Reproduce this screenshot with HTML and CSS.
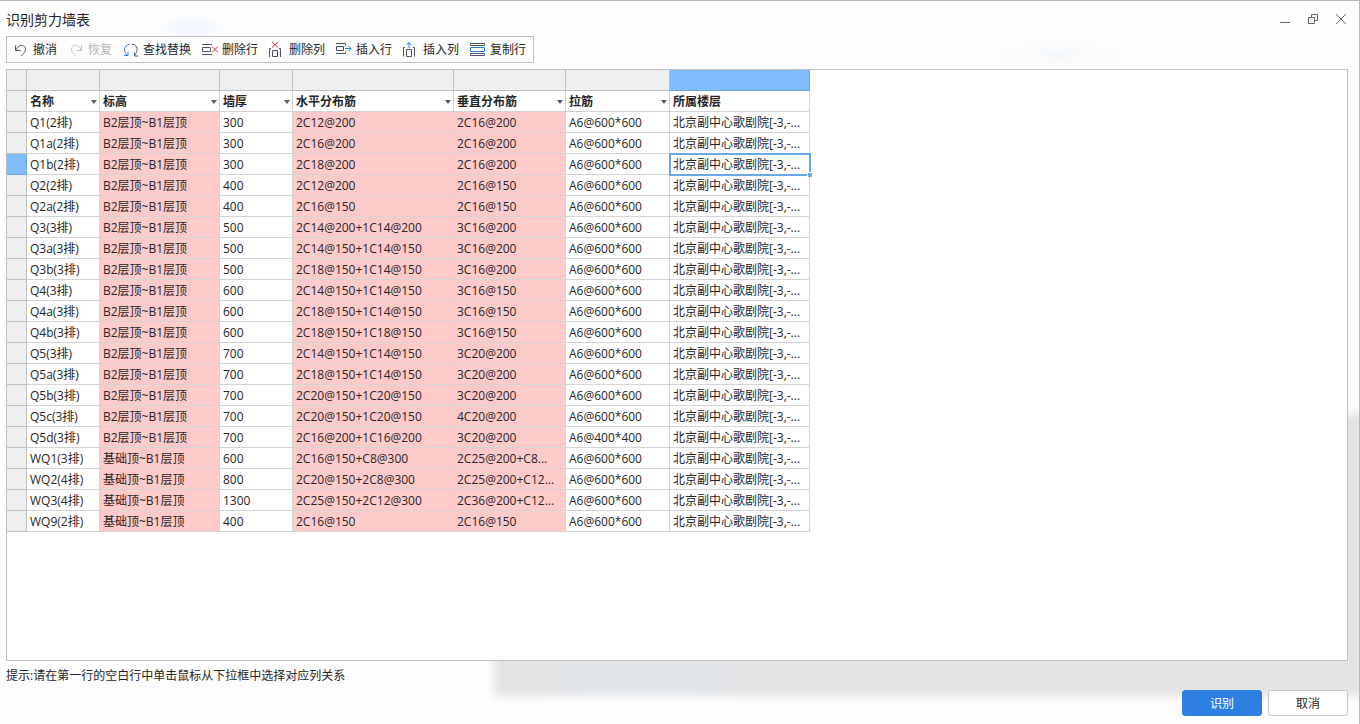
FILE: index.html
```
<!DOCTYPE html>
<html lang="zh-CN">
<head>
<meta charset="utf-8">
<title>识别剪力墙表</title>
<link rel="stylesheet" href="styles.css">
</head>
<body>
<main class="dialog">
  <div class="backdrop" aria-hidden="true"></div>
  <header class="titlebar">
    <h1 class="title">识别剪力墙表</h1>
    <div class="window-controls">
      <button class="window-button" type="button" aria-label="最小化"><svg viewBox="0 0 12 12"><path d="M1 9.5h10"/></svg></button>
      <button class="window-button" type="button" aria-label="还原"><svg viewBox="0 0 12 12"><path d="M1.500 4.500h6v6h-6zM4.500 4.500v-3h6v6h-3"/></svg></button>
      <button class="window-button" type="button" aria-label="关闭"><svg viewBox="0 0 12 12"><path d="M1 1l10 10M11 1L1 11"/></svg></button>
    </div>
  </header>

  <div class="toolbar" role="toolbar" aria-label="表格工具">
    <button class="tool" type="button"><svg class="icon" viewBox="0 0 16 16"><path d="M2.500 3.500v5h5M2.500 8.500C5 3.500 9 2 11.500 4.500c2.500 3 0 6.500-3.500 9.500"/></svg>撤消</button>
    <button class="tool" type="button" disabled><svg class="icon" viewBox="0 0 16 16"><path d="M13.500 3.500v5h-5M13.500 8.500C11 3.500 7 2 4.500 4.500c-2.500 3 0 6.500 3.500 9.500"/></svg>恢复</button>
    <button class="tool" type="button"><svg class="icon" viewBox="0 0 16 16"><path class="blue" d="M6.500 2C.5 3.500.5 9.500 4 13.500M1 13.500h4V10"/><path d="M9 2.500h2.500c3.500 3 3.500 7.500 0 10.500M15 14h-3.500v-3.500"/></svg>查找替换</button>
    <button class="tool" type="button"><svg class="icon" viewBox="0 0 16 16"><path d="M0 2.500h10M0 12.500h10M.5 5.500h8v4h-8z"/><path class="red" d="M10 4.500l6 6M16 4.500l-6 6"/></svg>删除行</button>
    <button class="tool" type="button"><svg class="icon" viewBox="0 0 16 16"><path d="M.5 15V6.500H2M11.500 15V6.500H10M3.500 8.500h5v6h-5z"/><path class="red" d="M3 0l6 5.500M9 0L3 5.500"/></svg>删除列</button>
    <button class="tool" type="button"><svg class="icon" viewBox="0 0 16 16"><path d="M0 1.500h9.500v2M0 11.500h9.500v-2M.5 4.500h7v4h-7z"/><path class="blue" d="M9 6.500h6M12.500 4L15 6.500 12.500 9"/></svg>插入行</button>
    <button class="tool" type="button"><svg class="icon" viewBox="0 0 16 16"><path d="M.5 14.500V5.500H2M11.500 14.500V5.500H10M3.500 7.500h5v7h-5z"/><path class="blue" d="M6 6V.5M3.500 3L6 .5 8.500 3"/></svg>插入列</button>
    <button class="tool" type="button"><svg class="icon" viewBox="0 0 16 16"><path d="M.5 3.500v-2h14v2zM.5 13.500v-2h14v2z"/><path class="blue" d="M.5 5.500h14v4H.5z"/></svg>复制行</button>
  </div>

  <section class="sheet-panel">
    <table class="sheet">
      <colgroup><col class="c-handle"><col class="c-name"><col class="c-level"><col class="c-thick"><col class="c-horizontal"><col class="c-vertical"><col class="c-tie"><col class="c-floor"></colgroup>
      <thead>
        <tr class="mapping"><td></td><td></td><td></td><td></td><td></td><td></td><td></td><td class="active"></td></tr>
        <tr class="names">
          <td class="handle"></td>
          <th scope="col"><div class="head">名称<button class="drop" type="button" aria-label="名称选项"></button></div></th>
          <th scope="col"><div class="head">标高<button class="drop" type="button" aria-label="标高选项"></button></div></th>
          <th scope="col"><div class="head">墙厚<button class="drop" type="button" aria-label="墙厚选项"></button></div></th>
          <th scope="col"><div class="head">水平分布筋<button class="drop" type="button" aria-label="水平分布筋选项"></button></div></th>
          <th scope="col"><div class="head">垂直分布筋<button class="drop" type="button" aria-label="垂直分布筋选项"></button></div></th>
          <th scope="col"><div class="head">拉筋<button class="drop" type="button" aria-label="拉筋选项"></button></div></th>
          <th scope="col">所属楼层</th>
        </tr>
      </thead>
      <tbody>
        <tr><td class="handle"></td><td>Q1(2排)</td><td class="warn">B2层顶~B1层顶</td><td>300</td><td class="warn">2C12@200</td><td class="warn">2C16@200</td><td>A6@600*600</td><td>北京副中心歌剧院[-3,-...</td></tr>
        <tr><td class="handle"></td><td>Q1a(2排)</td><td class="warn">B2层顶~B1层顶</td><td>300</td><td class="warn">2C16@200</td><td class="warn">2C16@200</td><td>A6@600*600</td><td>北京副中心歌剧院[-3,-...</td></tr>
        <tr><td class="handle active"></td><td>Q1b(2排)</td><td class="warn">B2层顶~B1层顶</td><td>300</td><td class="warn">2C18@200</td><td class="warn">2C16@200</td><td>A6@600*600</td><td class="selected">北京副中心歌剧院[-3,-...</td></tr>
        <tr><td class="handle"></td><td>Q2(2排)</td><td class="warn">B2层顶~B1层顶</td><td>400</td><td class="warn">2C12@200</td><td class="warn">2C16@150</td><td>A6@600*600</td><td>北京副中心歌剧院[-3,-...</td></tr>
        <tr><td class="handle"></td><td>Q2a(2排)</td><td class="warn">B2层顶~B1层顶</td><td>400</td><td class="warn">2C16@150</td><td class="warn">2C16@150</td><td>A6@600*600</td><td>北京副中心歌剧院[-3,-...</td></tr>
        <tr><td class="handle"></td><td>Q3(3排)</td><td class="warn">B2层顶~B1层顶</td><td>500</td><td class="warn">2C14@200+1C14@200</td><td class="warn">3C16@200</td><td>A6@600*600</td><td>北京副中心歌剧院[-3,-...</td></tr>
        <tr><td class="handle"></td><td>Q3a(3排)</td><td class="warn">B2层顶~B1层顶</td><td>500</td><td class="warn">2C14@150+1C14@150</td><td class="warn">3C16@200</td><td>A6@600*600</td><td>北京副中心歌剧院[-3,-...</td></tr>
        <tr><td class="handle"></td><td>Q3b(3排)</td><td class="warn">B2层顶~B1层顶</td><td>500</td><td class="warn">2C18@150+1C14@150</td><td class="warn">3C16@200</td><td>A6@600*600</td><td>北京副中心歌剧院[-3,-...</td></tr>
        <tr><td class="handle"></td><td>Q4(3排)</td><td class="warn">B2层顶~B1层顶</td><td>600</td><td class="warn">2C14@150+1C14@150</td><td class="warn">3C16@150</td><td>A6@600*600</td><td>北京副中心歌剧院[-3,-...</td></tr>
        <tr><td class="handle"></td><td>Q4a(3排)</td><td class="warn">B2层顶~B1层顶</td><td>600</td><td class="warn">2C18@150+1C14@150</td><td class="warn">3C16@150</td><td>A6@600*600</td><td>北京副中心歌剧院[-3,-...</td></tr>
        <tr><td class="handle"></td><td>Q4b(3排)</td><td class="warn">B2层顶~B1层顶</td><td>600</td><td class="warn">2C18@150+1C18@150</td><td class="warn">3C16@150</td><td>A6@600*600</td><td>北京副中心歌剧院[-3,-...</td></tr>
        <tr><td class="handle"></td><td>Q5(3排)</td><td class="warn">B2层顶~B1层顶</td><td>700</td><td class="warn">2C14@150+1C14@150</td><td class="warn">3C20@200</td><td>A6@600*600</td><td>北京副中心歌剧院[-3,-...</td></tr>
        <tr><td class="handle"></td><td>Q5a(3排)</td><td class="warn">B2层顶~B1层顶</td><td>700</td><td class="warn">2C18@150+1C14@150</td><td class="warn">3C20@200</td><td>A6@600*600</td><td>北京副中心歌剧院[-3,-...</td></tr>
        <tr><td class="handle"></td><td>Q5b(3排)</td><td class="warn">B2层顶~B1层顶</td><td>700</td><td class="warn">2C20@150+1C20@150</td><td class="warn">3C20@200</td><td>A6@600*600</td><td>北京副中心歌剧院[-3,-...</td></tr>
        <tr><td class="handle"></td><td>Q5c(3排)</td><td class="warn">B2层顶~B1层顶</td><td>700</td><td class="warn">2C20@150+1C20@150</td><td class="warn">4C20@200</td><td>A6@600*600</td><td>北京副中心歌剧院[-3,-...</td></tr>
        <tr><td class="handle"></td><td>Q5d(3排)</td><td class="warn">B2层顶~B1层顶</td><td>700</td><td class="warn">2C16@200+1C16@200</td><td class="warn">3C20@200</td><td>A6@400*400</td><td>北京副中心歌剧院[-3,-...</td></tr>
        <tr><td class="handle"></td><td>WQ1(3排)</td><td class="warn">基础顶~B1层顶</td><td>600</td><td class="warn">2C16@150+C8@300</td><td class="warn">2C25@200+C8...</td><td>A6@600*600</td><td>北京副中心歌剧院[-3,-...</td></tr>
        <tr><td class="handle"></td><td>WQ2(4排)</td><td class="warn">基础顶~B1层顶</td><td>800</td><td class="warn">2C20@150+2C8@300</td><td class="warn">2C25@200+C12...</td><td>A6@600*600</td><td>北京副中心歌剧院[-3,-...</td></tr>
        <tr><td class="handle"></td><td>WQ3(4排)</td><td class="warn">基础顶~B1层顶</td><td>1300</td><td class="warn">2C25@150+2C12@300</td><td class="warn">2C36@200+C12...</td><td>A6@600*600</td><td>北京副中心歌剧院[-3,-...</td></tr>
        <tr><td class="handle"></td><td>WQ9(2排)</td><td class="warn">基础顶~B1层顶</td><td>400</td><td class="warn">2C16@150</td><td class="warn">2C16@150</td><td>A6@600*600</td><td>北京副中心歌剧院[-3,-...</td></tr>
      </tbody>
    </table>
  </section>

  <footer class="footer">
    <p class="hint">提示:请在第一行的空白行中单击鼠标从下拉框中选择对应列关系</p>
    <div class="actions">
      <button class="action primary" type="button">识别</button>
      <button class="action" type="button">取消</button>
    </div>
  </footer>
</main>
</body>
</html>
```
FILE: styles.css
```
* {
  box-sizing: border-box;
}

body {
  margin: 0;
  color: #262626;
  font: 12px/18px "Open Sans", "Noto Sans CJK SC", sans-serif;
}

button {
  margin: 0;
  padding: 0;
  border: 0;
  background: none;
  color: inherit;
  font: inherit;
}

svg {
  fill: none;
  stroke: #4d5566;
}

.dialog {
  position: relative;
  isolation: isolate;
  display: flex;
  flex-direction: column;
  min-height: 100vh;
  padding: 0 11px 8px 6px;
  border-top: 1px solid #b9b9b9;
  border-right: 1px solid #b9b9b9;
  overflow: hidden;
  background:
    radial-gradient(ellipse 36px 16px at 192px 28px, #edf5fd, transparent),
    radial-gradient(ellipse 70px 14px at 78% 54px, #f5f8fb, transparent),
    #fdfdfd;
}

.backdrop {
  position: absolute;
  z-index: -1;
  top: 412px;
  right: -12px;
  bottom: 28px;
  left: 494px;
  background: linear-gradient(90deg, #e3e3e3 40px, #e1e5ea 90px, #e1e5ea 200px, #e3e3e3 260px);
  filter: blur(4px);
}

.titlebar {
  display: flex;
  justify-content: space-between;
  height: 35px;
}

.title {
  margin: 0;
  padding-top: 10px;
  font-size: 14px;
  font-weight: 400;
}

.window-controls {
  display: flex;
  gap: 16px;
  padding: 12px 1px 0 0;
}

.window-button {
  width: 12px;
  height: 12px;
}

.window-button svg {
  display: block;
  stroke: #666;
}

.toolbar {
  display: flex;
  align-self: flex-start;
  gap: 11px;
  height: 27px;
  padding: 0 7px 0 6px;
  border: 1px solid #c0c0c4;
  background: #fdfdfd;
}

.tool {
  display: flex;
  align-items: center;
  gap: 4px;
  padding-top: 1px;
  white-space: nowrap;
}

.tool:disabled {
  color: #b4b4b4;
}

.tool:disabled svg {
  stroke: #c4c4c8;
}

.icon {
  width: 16px;
  height: 16px;
}

.icon .blue {
  stroke: #2680e8;
}

.icon .red {
  stroke: #e02b35;
}

.sheet-panel {
  flex: 1;
  margin-top: 6px;
  border: 1px solid #c0c0c0;
  background: #fff;
}

.sheet {
  width: 803px;
  table-layout: fixed;
  border-spacing: 0;
}

.c-handle { width: 20px; }
.c-name, .c-thick { width: 73px; }
.c-level { width: 120px; }
.c-horizontal { width: 161px; }
.c-vertical { width: 112px; }
.c-tie { width: 104px; }
.c-floor { width: 140px; }

.sheet th,
.sheet td {
  height: 21px;
  padding: 2px 0 0 3px;
  border: solid #d4d4d4;
  border-width: 0 1px 1px 0;
  text-align: left;
  white-space: nowrap;
}

.sheet .mapping td,
.sheet .handle {
  border-color: #c0c0c0;
  background: #efefef;
}

.sheet .warn {
  background: #ffcaca;
}

.sheet .mapping .active,
.sheet .handle.active {
  border-color: #6ba8e6;
  background: #80bbfb;
}

.head {
  display: flex;
  align-items: center;
  justify-content: space-between;
  padding-right: 2px;
}

.drop {
  width: 6px;
  height: 4px;
  background: #555b70;
  clip-path: polygon(0 0, 100% 0, 50% 100%);
}

.sheet .selected {
  position: relative;
}

.selected::before {
  content: "";
  position: absolute;
  inset: -1px -2px -2px -1px;
  border: 2px solid #6ba8e6;
}

.selected::after {
  content: "";
  position: absolute;
  right: -3px;
  bottom: -3px;
  width: 4px;
  height: 4px;
  border: solid #fff;
  border-width: 1px 0 0 1px;
  background: #6ba8e6;
}

.footer {
  display: flex;
  justify-content: space-between;
  height: 55px;
}

.hint {
  margin: 0;
  padding-top: 6px;
}

.actions {
  display: flex;
  align-self: flex-end;
  gap: 6px;
}

.action {
  width: 80px;
  height: 26px;
  padding-top: 2px;
  border: 1px solid #c8c8c8;
  border-radius: 3px;
  background: #fff;
}

.action.primary {
  border-color: #2d80e2;
  background: #2d80e2;
  color: #fff;
}
```
